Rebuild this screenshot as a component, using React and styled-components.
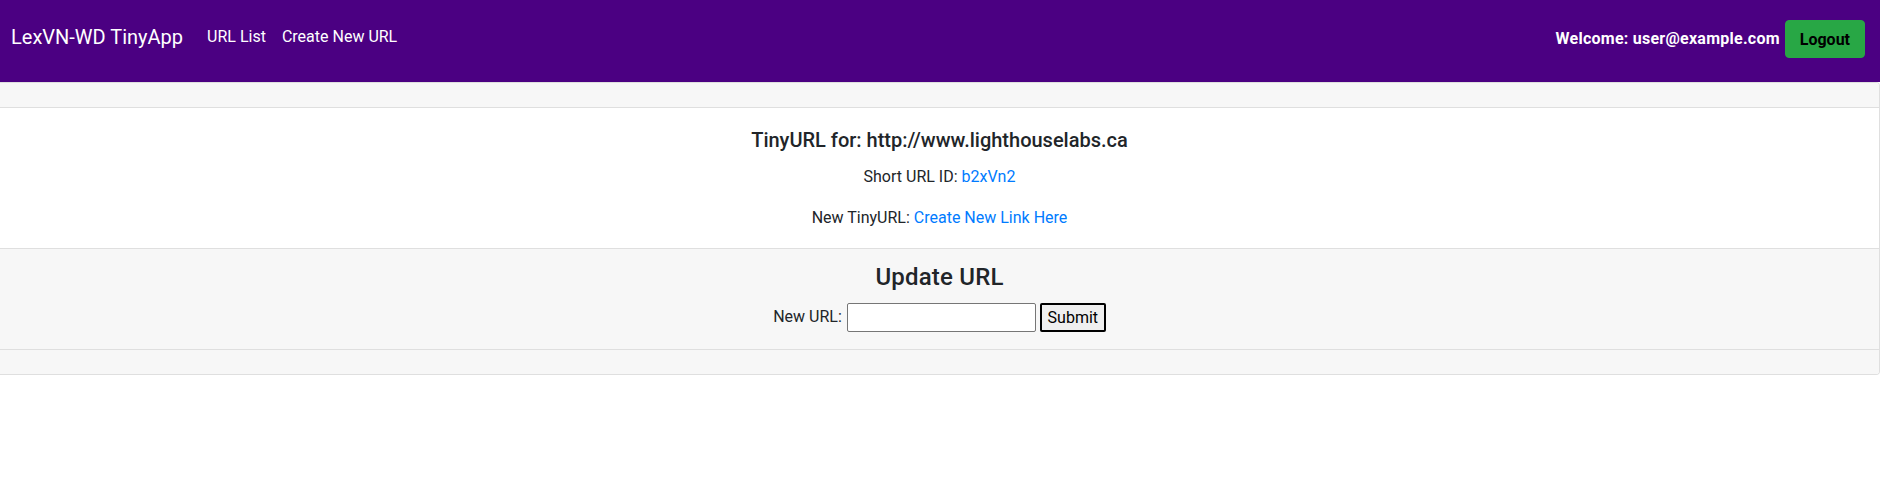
import React from "react";
import styled, { createGlobalStyle } from "styled-components";

const GlobalStyle = createGlobalStyle`
  * { box-sizing: border-box; }
  body {
    margin: 0;
    font-family: Roboto, "Liberation Sans", sans-serif;
    font-size: 16px;
    line-height: 1.5;
    color: #212529;
    background: #fff;
  }
`;

const Navbar = styled.nav`
  height: 82px;
  background-color: #4b0082;
  display: flex;
  align-items: flex-start;
  padding: 20px 15px 0 11px;
`;

const Brand = styled.a`
  font-size: 20px;
  line-height: 34px;
  color: #fff;
  text-decoration: none;
  margin-right: 24px;
`;

const NavLinks = styled.div`
  display: flex;
  gap: 16px;
  flex: 1;
`;

const NavLink = styled.a`
  font-size: 16px;
  line-height: 34px;
  color: #fff;
  text-decoration: none;
`;

const UserBox = styled.div`
  display: flex;
  align-items: center;
  gap: 5px;
`;

const Welcome = styled.span`
  color: #fff;
  font-weight: 700;
  letter-spacing: 0.25px;
  line-height: 36px;
`;

const LogoutButton = styled.button`
  height: 38px;
  padding: 0 14px;
  font-family: inherit;
  font-size: 16px;
  font-weight: 700;
  color: #000;
  background-color: #28a745;
  border: 1px solid #28a745;
  border-radius: 4px;
`;

const Card = styled.div`
  border: 1px solid #dfdfdf;
  border-left: 0;
  border-radius: 0 4px 4px 0;
  text-align: center;
  overflow: hidden;
`;

const Band = styled.div`
  background-color: #f7f7f7;
  padding: ${(p) => p.$pad || "12px 20px"};
  min-height: 24px;
  border-top: ${(p) => (p.$first ? "0" : "1px solid #dfdfdf")};
`;

const Body = styled.div`
  padding: 20px 20px 18px;
  border-top: 1px solid #dfdfdf;
`;

const Title = styled.h5`
  margin: 0 0 13px;
  font-size: 20px;
  font-weight: 500;
  line-height: 1.2;
`;

const Heading = styled.h4`
  margin: 0 0 11px;
  font-size: 24px;
  font-weight: 500;
  letter-spacing: 0.2px;
  line-height: 1.2;
`;

const Text = styled.p`
  margin: 0 0 17px;
  &:last-child { margin-bottom: 0; }
`;

const Link = styled.a`
  color: #007bff;
  text-decoration: none;
`;

const Form = styled.form`
  display: flex;
  justify-content: center;
  align-items: center;
  height: 29px;
`;

const Label = styled.label`
  margin-right: 5px;
`;

const Input = styled.input`
  width: 189px;
  height: 29px;
  margin-right: 4px;
  border: 1px solid #767676;
  border-radius: 2px;
  font-family: inherit;
  font-size: 16px;
  background: #fff;
`;

const Submit = styled.button`
  width: 66px;
  height: 29px;
  padding: 0;
  font-family: inherit;
  font-size: 16px;
  color: #000;
  background-color: #efefef;
  border: 2px solid #000;
  border-radius: 2px;
`;

export default function App() {
  return (
    <>
      <GlobalStyle />
      <Navbar>
        <Brand href="#">LexVN-WD TinyApp</Brand>
        <NavLinks>
          <NavLink href="#">URL List</NavLink>
          <NavLink href="#">Create New URL</NavLink>
        </NavLinks>
        <UserBox>
          <Welcome>Welcome: user@example.com</Welcome>
          <LogoutButton>Logout</LogoutButton>
        </UserBox>
      </Navbar>
      <Card>
        <Band $first />
        <Body>
          <Title>TinyURL for: http://www.lighthouselabs.ca</Title>
          <Text>
            Short URL ID: <Link href="#">b2xVn2</Link>
          </Text>
          <Text>
            New TinyURL: <Link href="#">Create New Link Here</Link>
          </Text>
        </Body>
        <Band $pad="14px 20px 17px">
          <Heading>Update URL</Heading>
          <Form onSubmit={(e) => e.preventDefault()}>
            <Label>New URL:</Label>
            <Input type="text" />
            <Submit type="submit">Submit</Submit>
          </Form>
        </Band>
        <Band />
      </Card>
    </>
  );
}
